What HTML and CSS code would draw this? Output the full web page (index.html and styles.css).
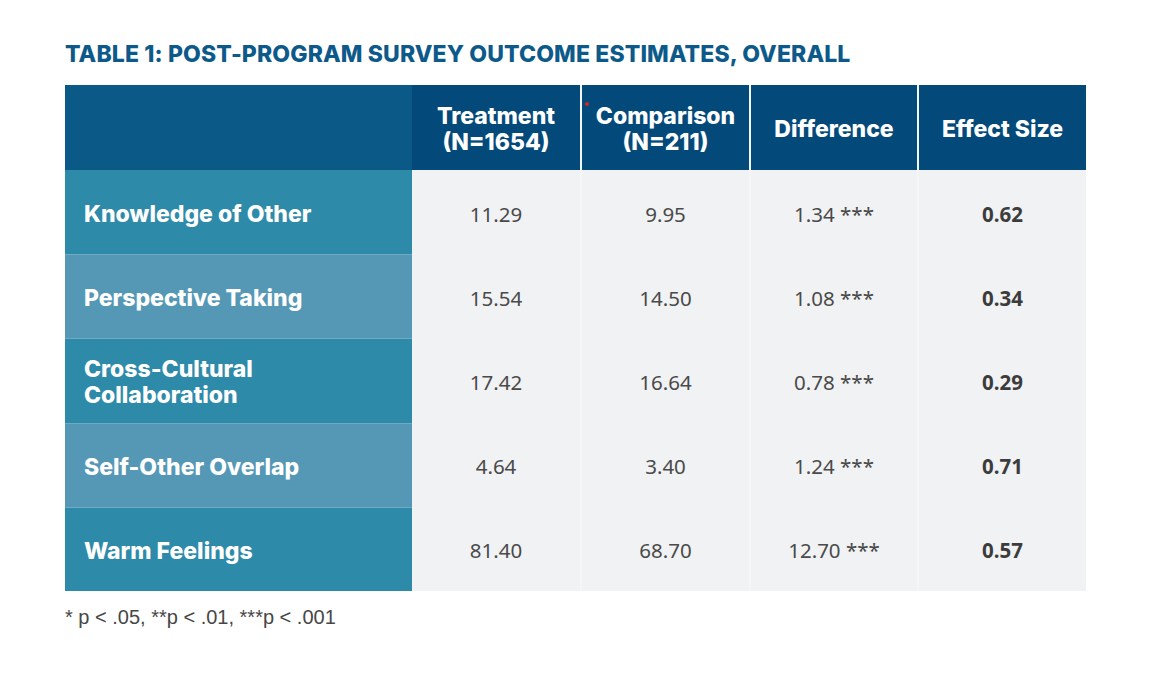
FILE: index.html
```html
<!DOCTYPE html>
<html lang="en">
<head>
<meta charset="utf-8">
<title>Table 1</title>
<link rel="stylesheet" href="styles.css">
</head>
<body>
<main class="page">
  <h1 class="title">TABLE 1: POST-PROGRAM SURVEY OUTCOME ESTIMATES, OVERALL</h1>
  <div class="table">
    <div class="hcell hfirst"></div>
    <div class="hcell">Treatment<br>(N=1654)</div>
    <div class="hcell sep marked">Comparison<br>(N=211)</div>
    <div class="hcell sep">Difference</div>
    <div class="hcell sep">Effect Size</div>

    <div class="label dark">Knowledge of Other</div>
    <div class="cell">11.29</div>
    <div class="cell sep">9.95</div>
    <div class="cell sep">1.34 ***</div>
    <div class="cell sep strong">0.62</div>

    <div class="label light line">Perspective Taking</div>
    <div class="cell">15.54</div>
    <div class="cell sep">14.50</div>
    <div class="cell sep">1.08 ***</div>
    <div class="cell sep strong">0.34</div>

    <div class="label dark line">Cross-Cultural<br>Collaboration</div>
    <div class="cell">17.42</div>
    <div class="cell sep">16.64</div>
    <div class="cell sep">0.78 ***</div>
    <div class="cell sep strong">0.29</div>

    <div class="label light line">Self-Other Overlap</div>
    <div class="cell">4.64</div>
    <div class="cell sep">3.40</div>
    <div class="cell sep">1.24 ***</div>
    <div class="cell sep strong">0.71</div>

    <div class="label dark line">Warm Feelings</div>
    <div class="cell">81.40</div>
    <div class="cell sep">68.70</div>
    <div class="cell sep">12.70 ***</div>
    <div class="cell sep strong">0.57</div>
  </div>
  <p class="note">* p &lt; .05, **p &lt; .01, ***p &lt; .001</p>
</main>
</body>
</html>
```
FILE: styles.css
```css
html, body {
  margin: 0;
  padding: 0;
  background: #ffffff;
}

.page {
  padding: 40px 0 0 65px;
}

.title {
  margin: 0 0 17px 0;
  font-family: Inter, "Noto Sans", sans-serif;
  font-weight: 800;
  font-size: 23px;
  line-height: 28px;
  letter-spacing: 0.12px;
  color: #0d5a8a;
}

.table {
  display: grid;
  width: 1021px;
  grid-template-columns: 347px 168px 169px 168px 169px;
  grid-template-rows: 85px repeat(5, 84.2px);
}

.hcell {
  background: #034a7a;
  color: #ffffff;
  font-family: Inter, "Noto Sans", sans-serif;
  font-weight: 800;
  font-size: 23px;
  line-height: 26px;
  display: flex;
  align-items: center;
  justify-content: center;
  text-align: center;
  padding-top: 3px;
  box-sizing: border-box;
}

.hfirst {
  background: #0b5987;
}

.sep {
  border-left: 2px solid #f5f6f8;
}

.marked {
  position: relative;
}

.marked::before {
  content: "";
  position: absolute;
  left: 3px;
  top: 17px;
  width: 4px;
  height: 4px;
  border-radius: 50%;
  background: #e0201c;
}

.label {
  color: #ffffff;
  font-family: Inter, "Noto Sans", sans-serif;
  font-weight: 800;
  font-size: 23px;
  line-height: 26px;
  display: flex;
  align-items: center;
  padding: 3px 0 0 19px;
  box-sizing: border-box;
}

.dark {
  background: #2e8aa9;
}

.light {
  background: #5598b5;
}

.line {
  border-top: 1px solid #72aac3;
}

.cell {
  background: #f1f2f4;
  color: #4a4a4a;
  font-family: "Noto Sans", "Open Sans", sans-serif;
  font-size: 20.5px;
  display: flex;
  align-items: center;
  justify-content: center;
  padding-top: 3px;
  box-sizing: border-box;
}

.strong {
  font-weight: 700;
  color: #3c3c3c;
}

.note {
  margin: 15px 0 0 0;
  font-family: "Liberation Sans", Arial, sans-serif;
  font-size: 20px;
  color: #474747;
}
```
